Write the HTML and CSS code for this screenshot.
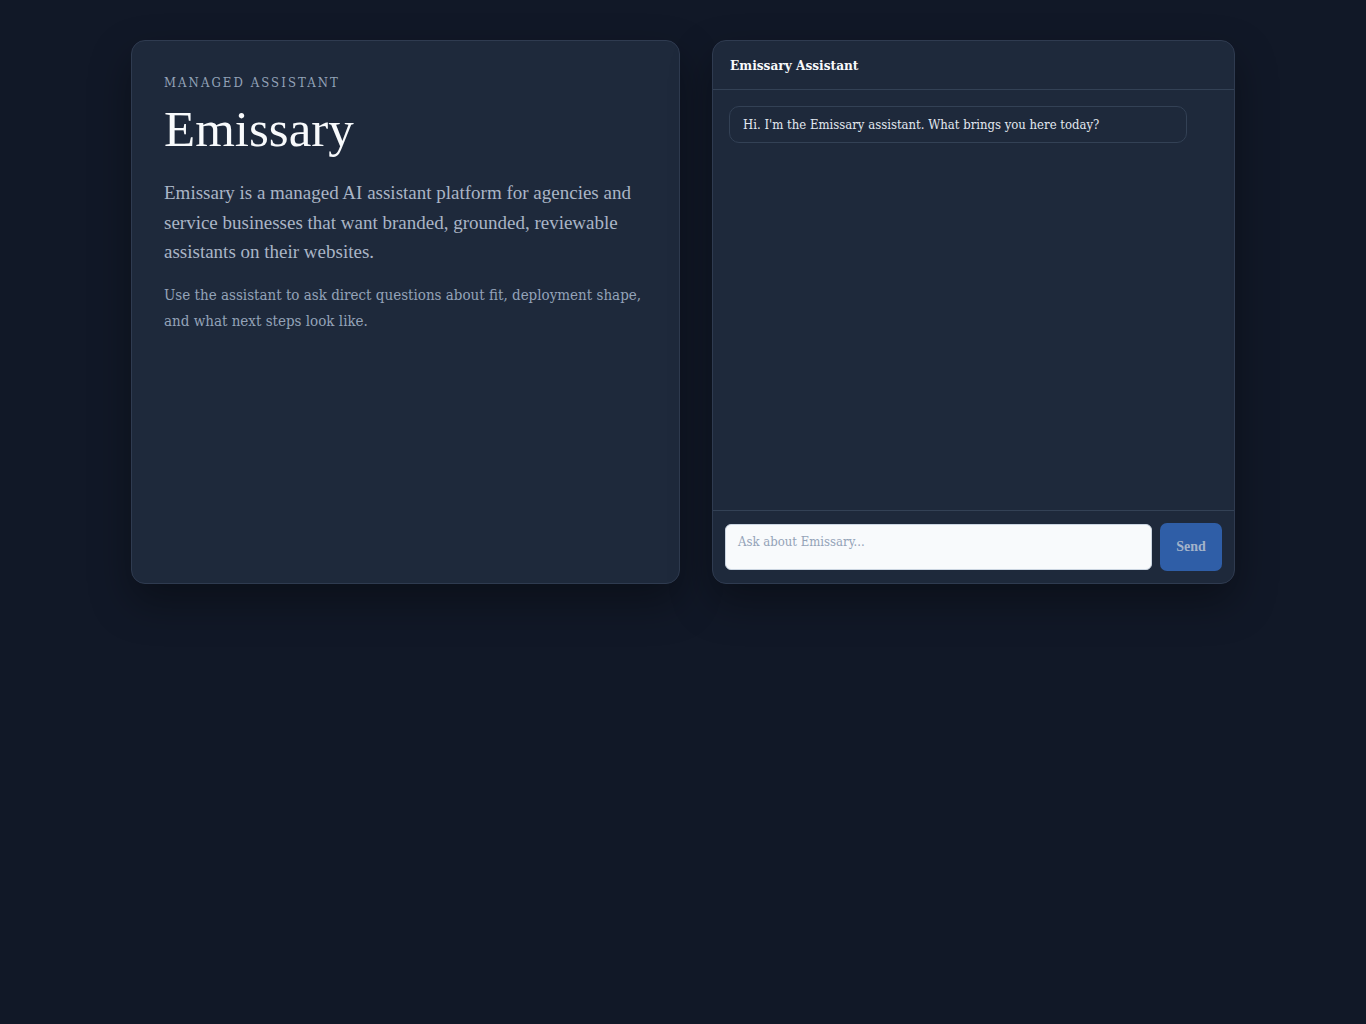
FILE: index.html
```html
<!DOCTYPE html>
<html lang="en">
<head>
<meta charset="utf-8">
<title>Emissary</title>
<link rel="stylesheet" href="styles.css">
</head>
<body>
<main class="layout">
  <section class="card intro">
    <p class="eyebrow">Managed Assistant</p>
    <h1 class="title">Emissary</h1>
    <p class="lead">Emissary is a managed AI assistant platform for agencies and service businesses that want branded, grounded, reviewable assistants on their websites.</p>
    <p class="note">Use the assistant to ask direct questions about fit, deployment shape, and what next steps look like.</p>
  </section>
  <section class="card chat">
    <header class="chat-header">Emissary Assistant</header>
    <div class="messages">
      <div class="bubble">Hi. I'm the Emissary assistant. What brings you here today?</div>
    </div>
    <form class="composer">
      <textarea class="input" placeholder="Ask about Emissary..."></textarea>
      <button class="send" type="button">Send</button>
    </form>
  </section>
</main>
</body>
</html>
```
FILE: styles.css
```css
* { box-sizing: border-box; }
html, body { margin: 0; padding: 0; }
body {
  background: #111827;
  color: #e2e8f0;
  font-family: "DejaVu Serif", serif;
  font-stretch: condensed;
  min-height: 1024px;
}
.layout {
  width: 1104px;
  margin: 0 auto;
  padding-top: 40px;
  display: grid;
  grid-template-columns: 1.05fr 1fr;
  gap: 32px;
  align-items: stretch;
}
.card {
  background: #1e293b;
  border: 1px solid #2f3b50;
  border-radius: 14px;
  box-shadow: 0 18px 40px rgba(0, 0, 0, 0.35);
}
.intro {
  padding: 32px;
}
.eyebrow {
  margin: 0;
  font-size: 13px;
  line-height: 20px;
  letter-spacing: 0.16em;
  text-transform: uppercase;
  color: #94a3b8;
}
.title {
  margin: 8px 0 0;
  font-family: "Liberation Serif", serif;
  font-stretch: normal;
  font-size: 51px;
  line-height: 56px;
  font-weight: 400;
  color: #f8fafc;
}
.lead {
  margin: 21px 0 0;
  font-family: "Liberation Serif", serif;
  font-stretch: normal;
  font-size: 19px;
  line-height: 29.5px;
  color: #aab5c6;
}
.note {
  margin: 15px 0 0;
  font-size: 15px;
  line-height: 26px;
  color: #94a3b8;
}
.chat {
  display: flex;
  flex-direction: column;
  overflow: hidden;
}
.chat-header {
  height: 49px;
  padding: 0 17px;
  display: flex;
  align-items: center;
  font-size: 13.5px;
  font-weight: 700;
  color: #f8fafc;
  border-bottom: 1px solid #334155;
}
.messages {
  height: 420px;
  padding: 16px;
  display: flex;
  flex-direction: column;
  align-items: flex-start;
}
.bubble {
  width: 93.6%;
  padding: 9px 13px;
  font-size: 13px;
  line-height: 17px;
  color: #e2e8f0;
  border: 1px solid #334155;
  border-radius: 10px;
  background: #1e293b;
}
.composer {
  margin: 0;
  border-top: 1px solid #334155;
  padding: 12px;
  display: flex;
  align-items: center;
  gap: 8px;
  flex: 1;
}
.input {
  flex: 1;
  height: 46px;
  resize: none;
  padding: 8px 12px;
  font-family: "DejaVu Serif", serif;
  font-stretch: condensed;
  font-size: 13px;
  line-height: 18px;
  color: #0f172a;
  background: #f8fafc;
  border: 1px solid #cbd5e1;
  border-radius: 6px;
  outline: none;
}
.input::placeholder { color: #94a3b8; }
.send {
  width: 62px;
  height: 48px;
  border: none;
  border-radius: 7px;
  background: #2f5ea7;
  color: #a3b3ca;
  font-family: "Liberation Serif", serif;
  font-size: 14px;
  font-weight: 700;
}
```
